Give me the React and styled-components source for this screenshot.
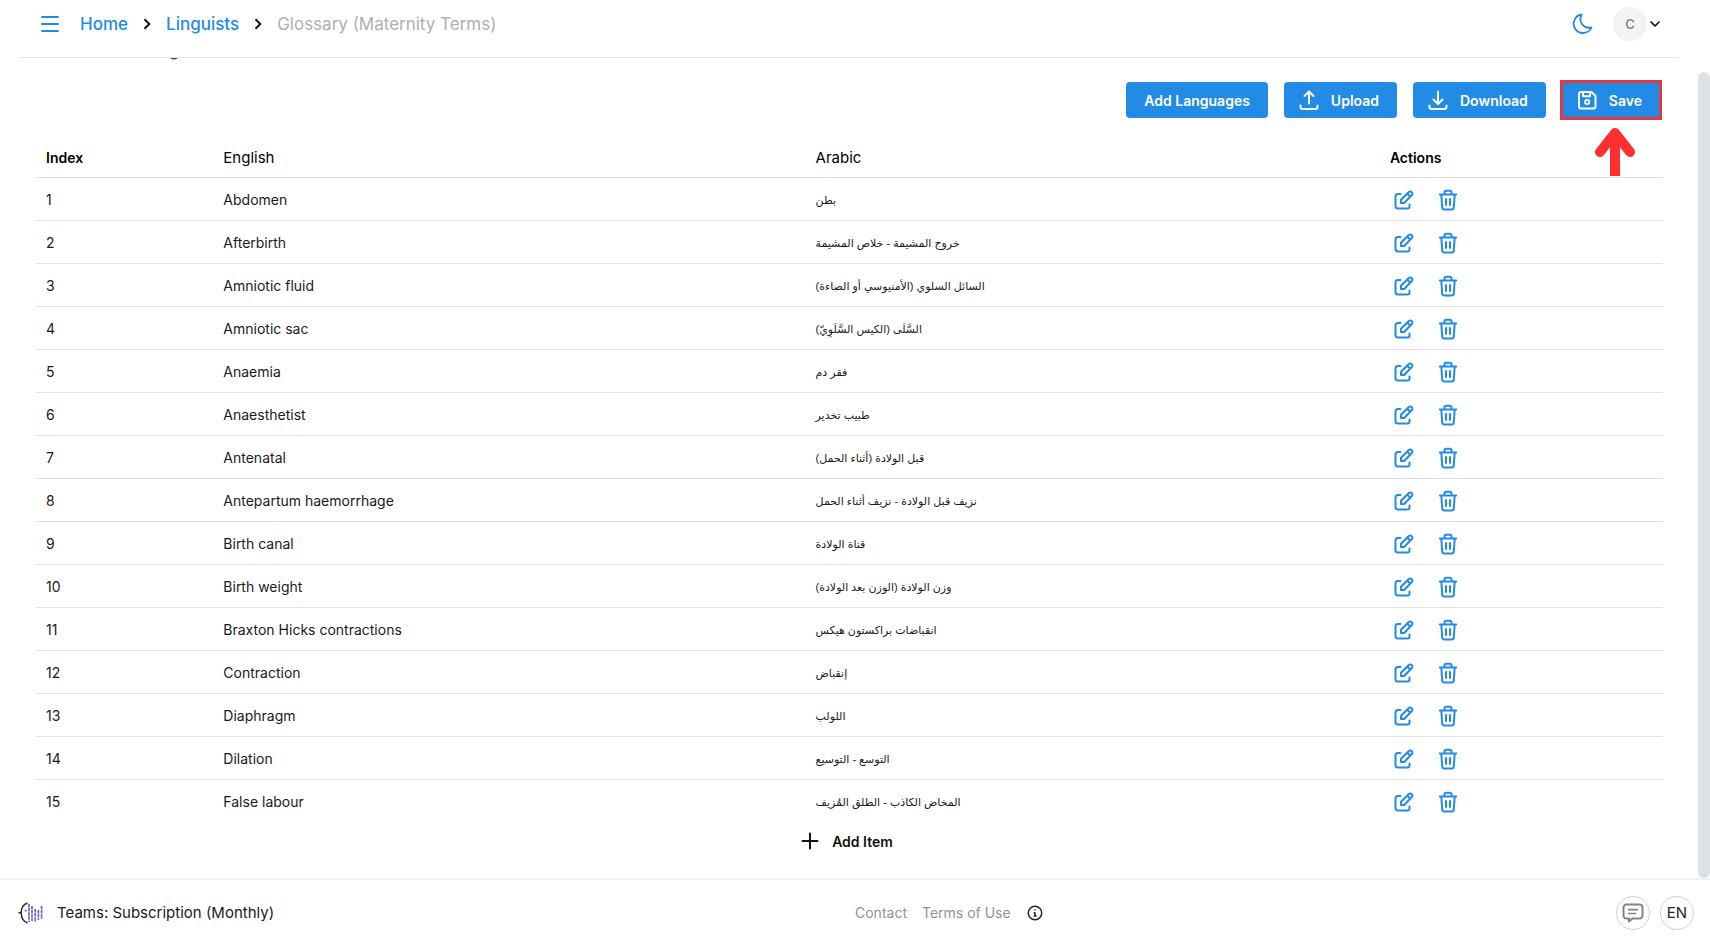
import React from "react";
import styled, { createGlobalStyle } from "styled-components";

const BLUE = "#228be6";

const GlobalStyle = createGlobalStyle`
  *, *::before, *::after { box-sizing: border-box; }
  body {
    margin: 0;
    background: #fff;
    color: #1a1a1a;
    font-family: Inter, "DejaVu Sans", sans-serif;
    font-size: 14px;
  }
  button { font-family: inherit; cursor: pointer; }
  a { text-decoration: none; }
`;

const Page = styled.div`
  display: flex;
  flex-direction: column;
  height: 100vh;
`;

const Header = styled.header`
  display: flex;
  align-items: center;
  justify-content: space-between;
  flex: none;
  height: 58px;
  margin: 0 31px 0 20px;
  padding: 0 16px 10px 18px;
  border-bottom: 1px solid #e3e5e8;
`;

const Group = styled.div`
  display: flex;
  align-items: center;
  gap: ${(p) => p.$gap || 0}px;
`;

const PlainButton = styled.button`
  display: flex;
  align-items: center;
  justify-content: center;
  padding: 0;
  border: 0;
  background: none;
  color: ${(p) => p.$color || BLUE};
`;

const Crumbs = styled.nav`
  display: flex;
  align-items: center;
  gap: 13px;
  margin-left: 18px;
  font-size: 17px;
  line-height: 24px;
`;

const CrumbLink = styled.a`
  color: ${BLUE};
  font-weight: 500;
`;

const CrumbCurrent = styled.span`
  color: #adb0b4;
`;

const Avatar = styled.span`
  display: flex;
  align-items: center;
  justify-content: center;
  width: 34px;
  height: 34px;
  border-radius: 50%;
  background: #f3f3f4;
  color: #868a8e;
  font-size: 13px;
  font-weight: 600;
`;

const Body = styled.div`
  display: flex;
  flex: 1;
  min-height: 0;
`;

const Main = styled.main`
  flex: 1;
  min-width: 0;
  overflow-y: auto;
  scrollbar-width: none;
  padding: 0 35px 16px 36px;
`;

const TitleEdge = styled.div`
  height: 24px;
  padding-left: 134px;

  svg {
    display: block;
  }
`;

const ScrollThumb = styled.div`
  flex: none;
  width: 12px;
  margin-top: 14px;
  border-radius: 6px;
  background: #dde1e3;
`;

const Toolbar = styled.div`
  display: flex;
  justify-content: flex-end;
  gap: 16px;
  margin-bottom: 19px;
  padding-right: 3px;
`;

const ToolButton = styled.button`
  display: flex;
  align-items: center;
  gap: 10px;
  height: 36px;
  padding: 0 18px 0 ${(p) => (p.$icon ? 13 : 18)}px;
  border: 0;
  border-radius: 4px;
  background: ${BLUE};
  color: #fff;
  font-size: 14px;
  font-weight: 600;
`;

const SaveSpot = styled.div`
  position: relative;

  ${ToolButton} {
    border-radius: 0;
    outline: 3px solid #e03a3f;
    outline-offset: -1px;
  }
`;

const Pointer = styled.svg`
  position: absolute;
  top: 45px;
  left: 50%;
  margin-left: -16px;
`;

const Table = styled.table`
  width: 100%;
  table-layout: fixed;
  border-collapse: separate;
  border-spacing: 0;
`;

const HeadCell = styled.th`
  width: ${(p) => p.$width || "auto"};
  height: 41px;
  padding: 0 10px;
  border-bottom: 1px solid #dee2e6;
  text-align: left;
  font-size: ${(p) => (p.$plain ? 15 : 14)}px;
  font-weight: ${(p) => (p.$plain ? 400 : 600)};
  color: #000;
`;

const Cell = styled.td`
  height: 43px;
  padding: 1px 10px 0;
  border-bottom: 1px solid #dee2e6;
  font-size: 14px;
  line-height: 20px;

  tr:last-child > & {
    border-bottom: 0;
  }
`;

const Arabic = styled.bdi`
  display: block;
  width: fit-content;
  font-family: "Liberation Sans", "DejaVu Sans", sans-serif;
  font-size: 11px;
`;

const RowAction = styled(PlainButton)`
  width: 28px;
  height: 28px;
`;

const AddRow = styled.div`
  display: flex;
  justify-content: center;
  padding-right: 8px;
`;

const AddButton = styled(PlainButton)`
  gap: 10px;
  height: 36px;
  font-size: 14px;
  font-weight: 600;
`;

const Footer = styled.footer`
  display: grid;
  grid-template-columns: 1fr 1fr;
  align-items: center;
  flex: none;
  height: 67px;
  border-top: 2px solid #f1f2f3;
`;

const Plan = styled.div`
  display: flex;
  align-items: center;
  gap: 13px;
  padding-left: 18px;
  font-size: 15px;
`;

const FooterRight = styled.div`
  display: flex;
  align-items: center;
  justify-content: space-between;
  padding-right: 16px;
`;

const FooterLink = styled.a`
  color: #909296;
  font-size: 14px;
`;

const RoundButton = styled.button`
  display: flex;
  align-items: center;
  justify-content: center;
  width: 34px;
  height: 34px;
  padding: 0;
  border: 1px solid #ced2d6;
  border-radius: 50%;
  background: #fff;
  color: #222;
  font-size: 15px;
`;

const Icon = ({ size = 24, stroke = 2, children }) => (
  <svg
    width={size}
    height={size}
    viewBox="0 0 24 24"
    fill="none"
    stroke="currentColor"
    strokeWidth={stroke}
    strokeLinecap="round"
    strokeLinejoin="round"
    aria-hidden="true"
  >
    {children}
  </svg>
);

const MenuIcon = () => (
  <Icon>
    <path d="M4 5h16M4 12h16M4 19h16" />
  </Icon>
);

const CrumbChevron = () => (
  <svg width="12" height="14" viewBox="0 0 12 14" fill="none" stroke="#111" strokeWidth="2" aria-hidden="true">
    <path d="M3.500 2.200 8.300 7l-4.800 4.800" />
  </svg>
);

const MoonIcon = () => (
  <Icon stroke={1.8}>
    <path d="M11.500 2.500A9.300 9.300 0 1 0 21.500 15.500C13.500 17 8 10 11.500 2.500Z" />
  </Icon>
);

const UploadIcon = () => (
  <Icon>
    <path d="M12 15.500V4M7.500 8 12 3.500 16.500 8M3.500 17.500V19a2 2 0 0 0 2 2h13a2 2 0 0 0 2-2v-1.500" />
  </Icon>
);

const DownloadIcon = () => (
  <Icon>
    <path d="M12 3.500V15M7.500 11.500 12 16l4.500-4.500M3.500 17.500V19a2 2 0 0 0 2 2h13a2 2 0 0 0 2-2v-1.500" />
  </Icon>
);

const SaveIcon = () => (
  <Icon stroke={1.9}>
    <path d="M6 4h10.500L20.500 8v10.500a2 2 0 0 1-2 2H6a2 2 0 0 1-2-2V6a2 2 0 0 1 2-2Z" />
    <path d="M8 4v4.200h7V4" />
    <circle cx="12.200" cy="14" r="2.100" />
  </Icon>
);

const EditIcon = () => (
  <Icon>
    <path d="M8.500 6H6A2.500 2.500 0 0 0 3.500 8.500v9.500a2.500 2.500 0 0 0 2.500 2.500h9.500a2 2 0 0 0 2-2V16.500" />
    <path d="M9 15v-3.200l7.800-7.800a2 2 0 0 1 2.900 0l.1.100a2 2 0 0 1 0 2.900L12.200 15H9ZM15.300 5.700l2.900 2.900" />
  </Icon>
);

const TrashIcon = () => (
  <Icon>
    <path d="M3.800 6.500h16.400M5.300 6.500l.9 13a2 2 0 0 0 2 1.900h7.600a2 2 0 0 0 2-1.900l.9-13M8.500 6V4.200a1.500 1.500 0 0 1 1.500-1.500h4a1.500 1.500 0 0 1 1.500 1.500V6M10 11v6M14 11v6" />
  </Icon>
);

const PlusIcon = () => (
  <Icon>
    <path d="M12 4.500v15M4.500 12h15" />
  </Icon>
);

const InfoIcon = () => (
  <Icon size={18}>
    <circle cx="12" cy="12" r="9" />
    <path d="M12 8h.01M11 11.500h1V16M10.800 16h2.600" />
  </Icon>
);

const ChatIcon = () => (
  <svg width="22" height="20" viewBox="0 0 22 20" fill="none" stroke="#7f8588" strokeWidth="2" strokeLinejoin="round" aria-hidden="true">
    <path d="M4.500 1.500h13a3 3 0 0 1 3 3v8a3 3 0 0 1-3 3H10.500L7 18.500v-3H4.500a3 3 0 0 1-3-3v-8a3 3 0 0 1 3-3Z" />
    <path d="M6 6.700h10M6 10.500h8" strokeWidth="1.700" />
  </svg>
);

const LogoIcon = () => (
  <svg width="26" height="22" viewBox="0 0 26 22" fill="none" aria-hidden="true">
    <path d="M9.500 1C5 2.500 3.200 6.500 3.200 10.800S5 19.300 9.500 21M.5 10.800h2.700" stroke="#2b2b33" strokeWidth="1.400" />
    <circle cx="7.600" cy="8.600" r=".9" fill="#3a3a55" />
    <path d="M11 2v18M14 4v15M17.200 7v13M20.400 8v10M23.600 4v13" stroke="#6d63b8" strokeWidth="1.700" strokeDasharray="3.500 .6" />
  </svg>
);

const terms = [
  ["Abdomen", "بطن"],
  ["Afterbirth", "خروج المشيمة - خلاص المشيمة"],
  ["Amniotic fluid", "السائل السلوي (الأمنيوسي أو الصاءة)"],
  ["Amniotic sac", "السَّلَى (الكيس السَّلَوِيّ)"],
  ["Anaemia", "فقر دم"],
  ["Anaesthetist", "طبيب تخدير"],
  ["Antenatal", "قبل الولادة (أثناء الحمل)"],
  ["Antepartum haemorrhage", "نزيف قبل الولادة - نزيف أثناء الحمل"],
  ["Birth canal", "قناة الولادة"],
  ["Birth weight", "وزن الولادة (الوزن بعد الولادة)"],
  ["Braxton Hicks contractions", "انقباضات براكستون هيكس"],
  ["Contraction", "إنقباض"],
  ["Diaphragm", "اللولب"],
  ["Dilation", "التوسع - التوسيع"],
  ["False labour", "المخاض الكاذب - الطلق المُزيف"],
];

export default function App() {
  return (
    <Page>
      <GlobalStyle />
      <Header>
        <Group>
          <PlainButton aria-label="Menu">
            <MenuIcon />
          </PlainButton>
          <Crumbs aria-label="Breadcrumb">
            <CrumbLink href="#home">Home</CrumbLink>
            <CrumbChevron />
            <CrumbLink href="#linguists">Linguists</CrumbLink>
            <CrumbChevron />
            <CrumbCurrent>Glossary (Maternity Terms)</CrumbCurrent>
          </Crumbs>
        </Group>
        <Group $gap={19}>
          <PlainButton aria-label="Dark mode">
            <MoonIcon />
          </PlainButton>
          <PlainButton $color="#111" aria-label="Account">
            <Avatar>C</Avatar>
            <Icon size={16} stroke={2.6}>
              <path d="m6 9 6 6 6-6" />
            </Icon>
          </PlainButton>
        </Group>
      </Header>

      <Body>
        <Main>
          <TitleEdge>
            <svg width="8" height="2" viewBox="0 0 8 2" aria-hidden="true">
              <path d="M1 0q3 1.600 6 0" fill="none" stroke="#333" strokeWidth="1.200" />
            </svg>
          </TitleEdge>
          <Toolbar>
            <ToolButton>Add Languages</ToolButton>
            <ToolButton $icon>
              <UploadIcon />
              Upload
            </ToolButton>
            <ToolButton $icon>
              <DownloadIcon />
              Download
            </ToolButton>
            <SaveSpot>
              <ToolButton $icon>
                <SaveIcon />
                Save
              </ToolButton>
              <Pointer width="40" height="50" viewBox="0 0 40 50" fill="none" stroke="#fd2f30" aria-hidden="true">
                <path d="M20 6v43" strokeWidth="10" />
                <path d="M5 25 20 6l15 19" strokeWidth="10" strokeLinecap="round" strokeLinejoin="round" />
              </Pointer>
            </SaveSpot>
          </Toolbar>

          <Table>
            <thead>
              <tr>
                <HeadCell $width="10.9%">Index</HeadCell>
                <HeadCell $width="36.4%" $plain>English</HeadCell>
                <HeadCell $width="35.3%" $plain>Arabic</HeadCell>
                <HeadCell>Actions</HeadCell>
              </tr>
            </thead>
            <tbody>
              {terms.map(([english, arabic], i) => (
                <tr key={english}>
                  <Cell>{i + 1}</Cell>
                  <Cell>{english}</Cell>
                  <Cell>
                    <Arabic lang="ar" dir="rtl">{arabic}</Arabic>
                  </Cell>
                  <Cell>
                    <Group $gap={16}>
                      <RowAction aria-label={`Edit ${english}`}>
                        <EditIcon />
                      </RowAction>
                      <RowAction aria-label={`Delete ${english}`}>
                        <TrashIcon />
                      </RowAction>
                    </Group>
                  </Cell>
                </tr>
              ))}
            </tbody>
          </Table>

          <AddRow>
            <AddButton $color="#111">
              <PlusIcon />
              Add Item
            </AddButton>
          </AddRow>
        </Main>
        <ScrollThumb />
      </Body>

      <Footer>
        <Plan>
          <LogoIcon />
          Teams: Subscription (Monthly)
        </Plan>
        <FooterRight>
          <Group $gap={15}>
            <FooterLink href="#contact">Contact</FooterLink>
            <FooterLink href="#terms">Terms of Use</FooterLink>
            <PlainButton $color="#222" aria-label="Information">
              <InfoIcon />
            </PlainButton>
          </Group>
          <Group $gap={10}>
            <RoundButton aria-label="Chat">
              <ChatIcon />
            </RoundButton>
            <RoundButton>EN</RoundButton>
          </Group>
        </FooterRight>
      </Footer>
    </Page>
  );
}
